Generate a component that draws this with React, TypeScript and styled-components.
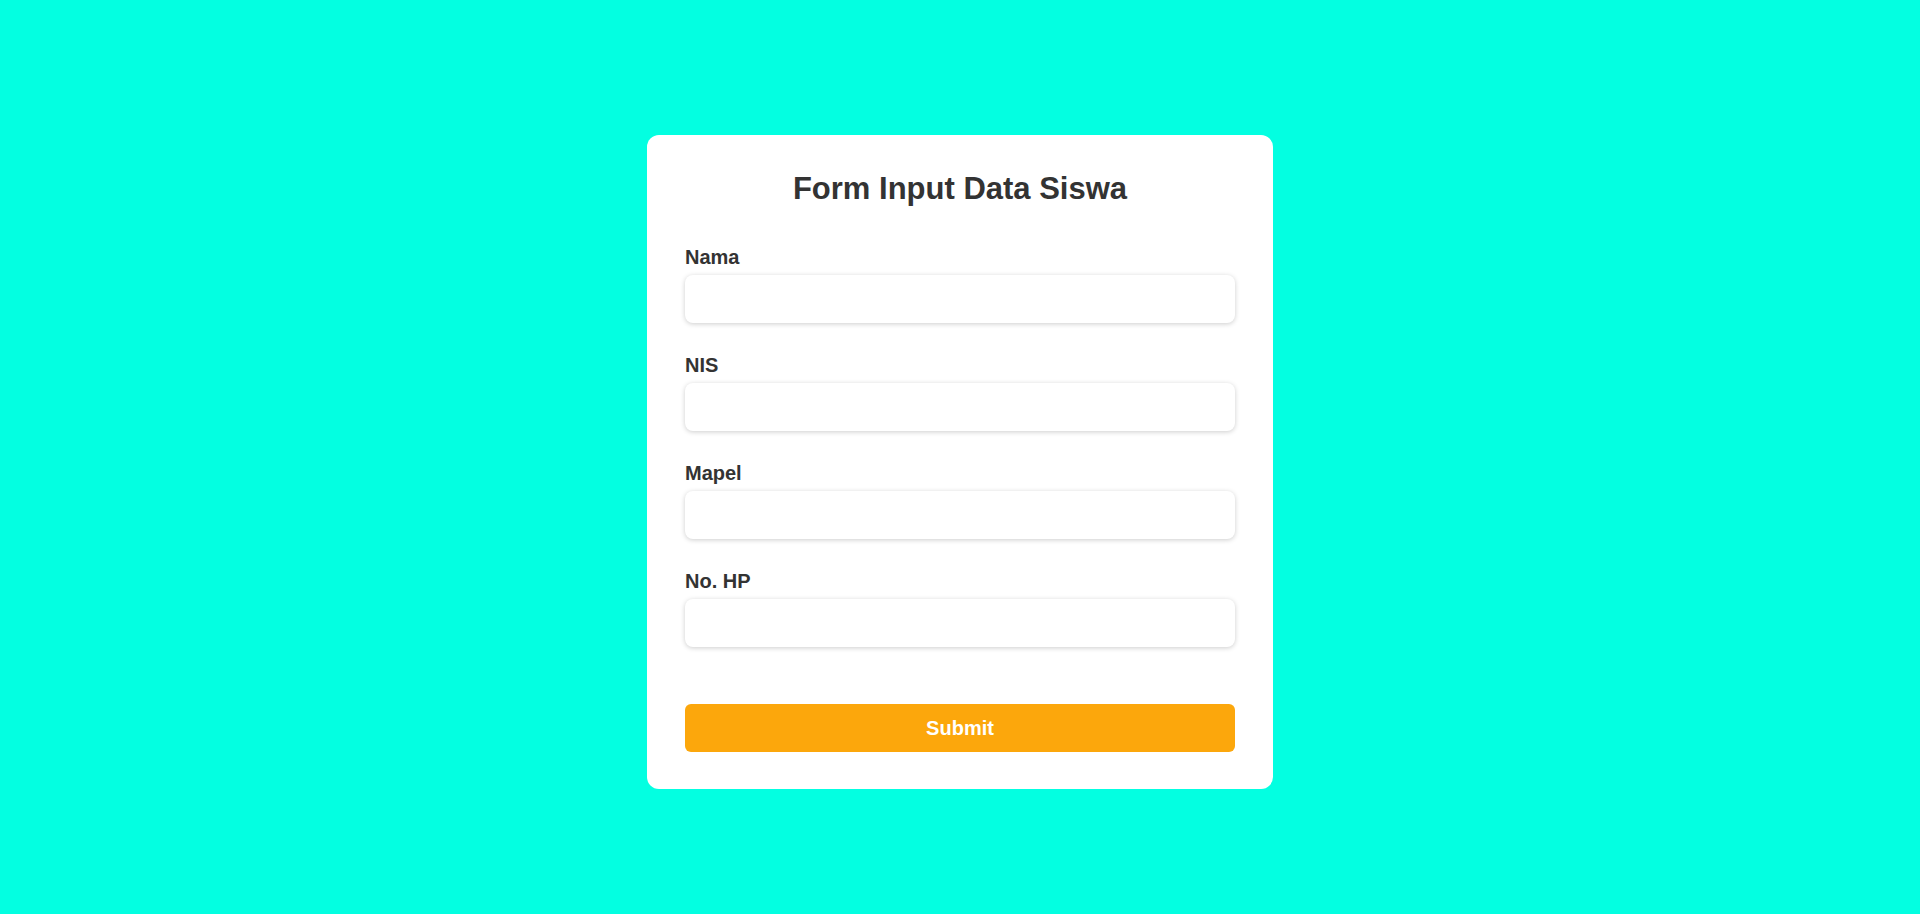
import React from "react";
import styled, { createGlobalStyle } from "styled-components";

const GlobalStyle = createGlobalStyle`
  * { box-sizing: border-box; }
  html, body {
    margin: 0;
    padding: 0;
    background: #03ffe1;
    font-family: "Liberation Sans", Arial, sans-serif;
  }
`;

const Page = styled.main`
  min-height: 914px;
  display: flex;
  justify-content: center;
  align-items: flex-start;
  padding-top: 135px;
`;

const Card = styled.form`
  width: 626px;
  background: #ffffff;
  border-radius: 12px;
  padding: 36px 38px 37px;
  display: flex;
  flex-direction: column;
`;

const Title = styled.h2`
  margin: 0 0 39px;
  font-size: 31px;
  line-height: 36px;
  font-weight: 700;
  color: #333333;
  text-align: center;
`;

const Field = styled.div`
  display: flex;
  flex-direction: column;
  gap: 7px;
  margin-bottom: 31px;
`;

const Label = styled.label`
  font-size: 20px;
  line-height: 22px;
  font-weight: 700;
  color: #333333;
`;

const Input = styled.input`
  height: 48px;
  width: 100%;
  border: none;
  border-radius: 8px;
  background: #ffffff;
  box-shadow: 0 1px 5px rgba(0, 0, 0, 0.2);
  padding: 0 12px;
  font-size: 16px;
  font-family: inherit;
  outline: none;
`;

const Submit = styled.button`
  margin-top: 26px;
  height: 48px;
  width: 100%;
  border: none;
  border-radius: 6px;
  background: #fca70c;
  color: #ffffff;
  font-family: inherit;
  font-size: 20px;
  font-weight: 700;
  cursor: pointer;
`;

const fields = [
  { id: "nama", label: "Nama" },
  { id: "nis", label: "NIS" },
  { id: "mapel", label: "Mapel" },
  { id: "hp", label: "No. HP" },
];

export default function App() {
  return (
    <>
      <GlobalStyle />
      <Page>
        <Card onSubmit={(e) => e.preventDefault()}>
          <Title>Form Input Data Siswa</Title>
          {fields.map((f) => (
            <Field key={f.id}>
              <Label htmlFor={f.id}>{f.label}</Label>
              <Input id={f.id} type="text" />
            </Field>
          ))}
          <Submit type="submit">Submit</Submit>
        </Card>
      </Page>
    </>
  );
}
